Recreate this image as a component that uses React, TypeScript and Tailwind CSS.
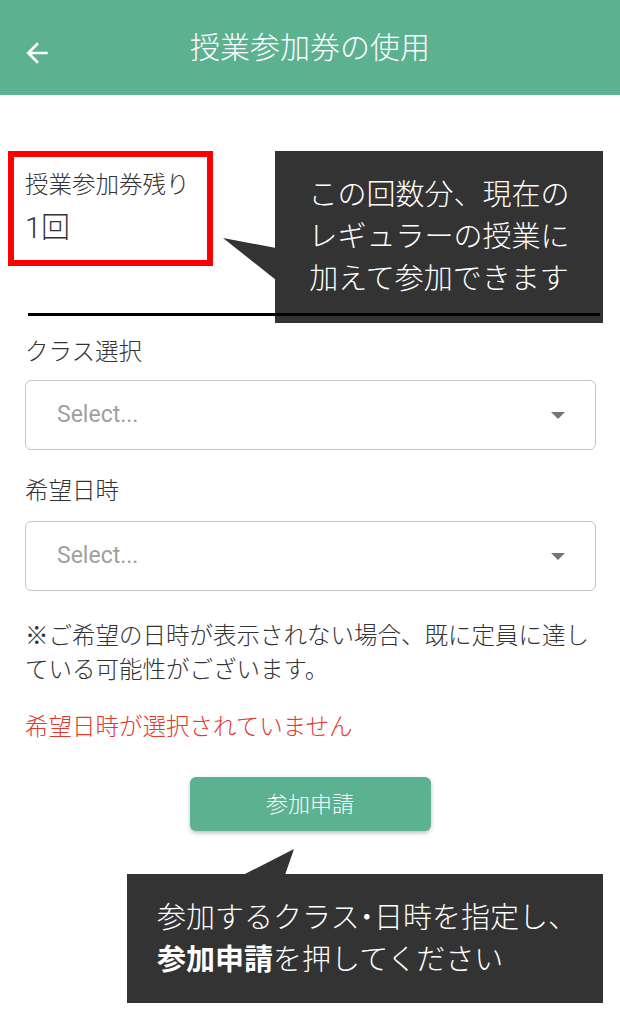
import type { FC } from 'react';

const Caret: FC = () => (
  <svg width="14" height="7" viewBox="0 0 14 7" className="shrink-0">
    <polygon points="0,0 14,0 7,7" fill="#757575" />
  </svg>
);

const SelectBox: FC = () => (
  <div className="flex h-[70px] items-center justify-between rounded-[6px] border border-[#c6c6c6] pl-[31px] pr-[30px]">
    <span className="font-[Roboto] text-[23px] font-normal text-[#a0a0a0]">Select...</span>
    <Caret />
  </div>
);

const App: FC = () => {
  return (
    <div className="relative h-[1020px] w-[620px] overflow-hidden bg-white font-[Roboto,'Noto_Sans_CJK_JP',sans-serif] font-light text-[#333]">
      {/* header */}
      <header className="relative flex h-[95px] items-center justify-center bg-[#5cb190]">
        <svg
          className="absolute left-[21px] top-[37px] h-[32px] w-[32px]"
          viewBox="0 0 24 24"
          fill="#fff"
        >
          <path d="M20 11H7.83l5.59-5.59L12 4l-8 8 8 8 1.41-1.41L7.83 13H20v-2z" />
        </svg>
        <h1 className="text-[30px] font-light leading-[40px] text-white">授業参加券の使用</h1>
      </header>

      <main className="pl-[25px] pr-[24px]">
        <div className="pt-[75px]">
          <p className="text-[23.5px] leading-[30px]">授業参加券残り</p>
          <p className="mt-[8px] text-[29px] leading-[40px]">1回</p>
        </div>

        <div className="relative z-10 ml-[3px] mt-[65px] h-[3px] w-[572px] bg-black" />

        <p className="mt-[21px] text-[23.5px] leading-[30px]">クラス選択</p>
        <div className="mt-[13px]">
          <SelectBox />
        </div>

        <p className="mt-[26px] text-[23.5px] leading-[30px]">希望日時</p>
        <div className="mt-[15px]">
          <SelectBox />
        </div>

        <p className="mt-[28px] text-[23.5px] leading-[34px]">
          ※ご希望の日時が表示されない場合、既に定員に達している可能性がございます。
        </p>

        <p className="mt-[23px] text-[23.5px] leading-[34px] text-[#e23b2e]">希望日時が選択されていません</p>

        <div className="mt-[33px] flex justify-center pr-[1px]">
          <button className="h-[54px] w-[241px] rounded-[6px] bg-[#5cb190] text-[22px] font-light text-white shadow-[0_2px_4px_rgba(0,0,0,0.25)]">
            参加申請
          </button>
        </div>
      </main>

      {/* annotation: red frame */}
      <div className="absolute left-[8px] top-[151px] h-[115px] w-[205px] border-[6px] border-[#ff0000]" />

      {/* annotation: callout 1 */}
      <svg className="absolute left-[222px] top-[236px]" width="56" height="46" viewBox="0 0 56 46">
        <polygon points="1,2 54,12 54,44" fill="#333" />
      </svg>
      <div className="absolute left-[275px] top-[151px] flex h-[172px] w-[328px] items-center justify-center bg-[#333]">
        <p className="text-center text-[29px] leading-[42px] text-white">
          この回数分、現在の
          <br />
          レギュラーの授業に
          <br />
          加えて参加できます
        </p>
      </div>

      {/* annotation: callout 2 */}
      <svg className="absolute left-[242px] top-[848px]" width="56" height="28" viewBox="0 0 56 28">
        <polygon points="52,1 1,27 43,27" fill="#333" />
      </svg>
      <div className="absolute left-[127px] top-[874px] flex h-[129px] w-[476px] items-center bg-[#333] pl-[30px]">
        <p className="text-[29px] leading-[42px] text-white">
          参加するクラス<span className="[font-feature-settings:'halt']">・</span>日時を指定し、
          <br />
          <span className="font-bold">参加申請</span>を押してください
        </p>
      </div>
    </div>
  );
};

export default App;
